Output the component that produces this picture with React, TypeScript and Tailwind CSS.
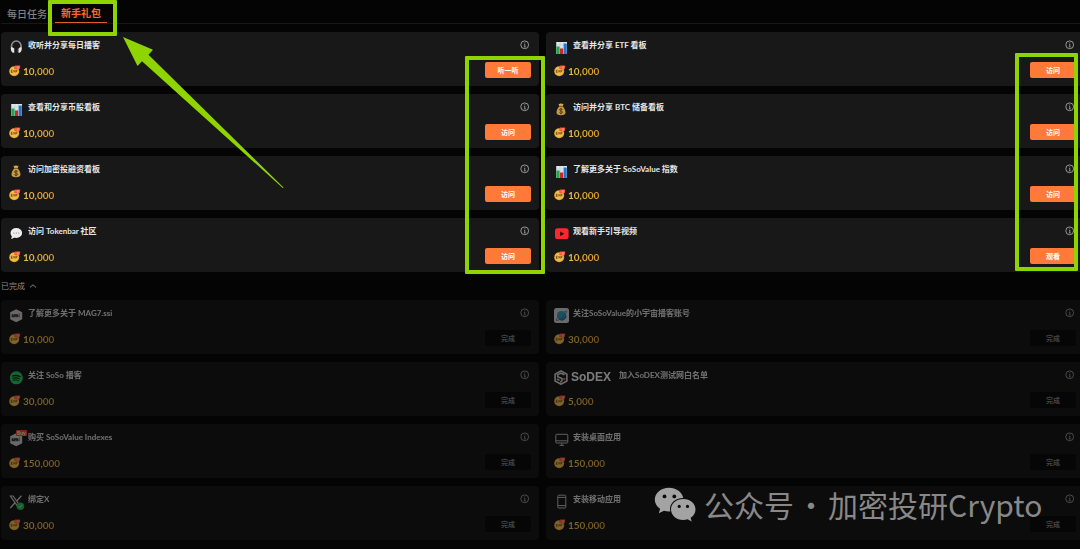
import type { ReactNode } from 'react';

type Task = { title: string; amount: string; action: string; icon: ReactNode; wide?: boolean };

function Headphones() {
  return (
    <svg viewBox="1 1.6 14.4 14.4" className="size-[15px]" aria-hidden="true">
      <path d="M3.400 10V7.400a4.600 4.900 0 0 1 9.200 0V10" fill="none" stroke="#8d9196" strokeWidth="1.500" />
      <path d="M3 8.600c1.500-.6 3.100.8 3.500 2.800.2 1.400-.2 2.400-1 2.500C3.600 14 2.300 11.500 3 8.600Z" fill="#e4e4e4" />
      <path d="M13 8.600c-1.500-.6-3.100.8-3.500 2.800-.2 1.400.2 2.400 1 2.500 1.900.1 3.200-2.400 2.500-5.300Z" fill="#e4e4e4" />
      <path d="M6.300 9.300v4.200M9.700 9.300v4.200" stroke="#3c3f44" strokeWidth=".9" />
    </svg>
  );
}

function BarChart() {
  return (
    <svg viewBox="0 0 15 15" className="size-[15px]" aria-hidden="true">
      <path d="M2.200 2h10.800v12h-10.800z" fill="#dde8ef" />
      <path d="M2.200 5h10.800M2.200 8h10.800M2.200 11h10.800M6 2v12M9.500 2v12" stroke="#aec3d1" strokeWidth=".4" />
      <path d="M2.400 6.500h3.200V14H2.400z" fill="#21a545" />
      <path d="M6 8.500h3.200V14H6z" fill="#d3242c" />
      <path d="M9.700 3.500h3.100V14H9.700z" fill="#2478c4" />
    </svg>
  );
}

function MoneyBag() {
  return (
    <svg viewBox="0.500 0.300 15 15" className="size-[15px]" aria-hidden="true">
      <path d="m5 2 1.300.4L7.500 1.500l1.200.9L10 2 9.200 4.700H5.800Z" fill="#d9ae57" />
      <path d="M5.800 4.700h3.400c1.600 1.700 2.800 3.800 2.800 6.100 0 2-1.400 2.700-4.500 2.700S3 12.800 3 10.800c0-2.300 1.200-4.400 2.800-6.100Z" fill="#c79a46" />
      <path d="M5.300 4.600h4.400" stroke="#80551e" strokeWidth="1" />
      <path d="M9 8c-.3-.7-.8-.9-1.500-.9-1 0-1.500.4-1.500 1.100 0 1.500 3.100.7 3.100 2.300 0 .8-.6 1.200-1.600 1.200-.8 0-1.400-.3-1.700-1M7.500 6.300v6.200" fill="none" stroke="#4e3513" strokeWidth=".9" />
    </svg>
  );
}

function Speech() {
  return (
    <svg viewBox="0 0 15 15" className="size-[15px]" aria-hidden="true">
      <ellipse cx="7.300" cy="7" rx="5.800" ry="4.900" fill="#eeeeee" />
      <path d="M2.800 9.500c.1 1.500-.2 2.500-.9 3.300 1.700-.1 2.900-.7 3.700-1.600Z" fill="#eeeeee" />
      <circle cx="4.900" cy="7" r=".6" fill="#777" />
      <circle cx="7.300" cy="7" r=".6" fill="#777" />
      <circle cx="9.700" cy="7" r=".6" fill="#777" />
    </svg>
  );
}

function YouTube() {
  return (
    <svg viewBox="0 0 15 15" className="size-[15px]" aria-hidden="true">
      <rect x="1" y="2.200" width="13.600" height="10.800" rx="2.600" fill="#f9282f" />
      <path d="m6.200 5.400 4 2.300-4 2.300Z" fill="#180505" />
    </svg>
  );
}

function Hexagon({ badge }: { badge?: boolean }) {
  return (
    <span className="relative block size-[15px]">
      <svg viewBox="0.800 0 15 15" className="size-[15px]" aria-hidden="true">
        <path d="m8 1.200 6 3.100v6.900l-6 3-6-3V4.300Z" fill="#d9d9d9" />
        <path d="M3.500 6.200h6.200v3H3.500z" fill="#2b2b2b" />
        <path d="M5.500 6.300v1.300M7.600 7.800v1.300" stroke="#d9d9d9" strokeWidth=".6" />
        <path d="M10.300 6.800h1v2.400h-1z" fill="#2b2b2b" />
        <circle cx="11.100" cy="5.900" r=".8" fill="#ff6b35" />
      </svg>
      {badge && (
        <span className="absolute -top-[2px] left-[7px] rounded-[1px] bg-[#ff4a22] px-[1px] text-[5px] leading-[6px] font-bold text-white">
          Buy
        </span>
      )}
    </span>
  );
}

function Spotify() {
  return (
    <svg viewBox="0.700 0.200 15 15" className="size-[15px]" aria-hidden="true">
      <circle cx="8" cy="8" r="6.500" fill="#1ed760" />
      <path d="M4.200 6.200c2.600-.8 5.500-.5 7.700.7" fill="none" stroke="#111" strokeWidth="1.300" strokeLinecap="round" />
      <path d="M4.500 8.400c2.200-.6 4.700-.4 6.600.7" fill="none" stroke="#111" strokeWidth="1.100" strokeLinecap="round" />
      <path d="M4.800 10.400c1.900-.5 3.900-.3 5.600.6" fill="none" stroke="#111" strokeWidth=".9" strokeLinecap="round" />
    </svg>
  );
}

function XCheck() {
  return (
    <svg viewBox="0 0 15 15" className="size-[15px] overflow-visible" aria-hidden="true">
      <path d="M1.400 2h2.700l8.300 11.800H9.700Z" fill="none" stroke="#d6d6d6" strokeWidth="1.200" />
      <path d="M12.400 1.700 7.900 6.800M6 8.700 1.300 14" stroke="#d6d6d6" strokeWidth="1.300" />
      <circle cx="11.400" cy="12.200" r="3.800" fill="#26c251" />
      <path d="m9.700 12.200 1.200 1.300 2.200-2.600" fill="none" stroke="#c9f5d5" strokeWidth=".9" />
    </svg>
  );
}

function Planet() {
  return (
    <svg viewBox="0 0 15 15" className="size-[15px]" aria-hidden="true">
      <rect width="15" height="15" rx="2.500" fill="#dedede" />
      <circle cx="7.500" cy="7.500" r="4.500" fill="#2fa3cb" />
      <path d="M4.500 11c3.500.8 6.800-1.500 7.400-5a4.500 4.500 0 0 1-7.400 5Z" fill="#1b7fa8" />
      <path d="M3.900 9.200C2 11.400 1.900 12.700 3 12.600c1.800-.2 9.300-6.500 9.700-9.100.1-1-1.200-.7-2.500.2" fill="none" stroke="#55606a" strokeWidth=".8" />
    </svg>
  );
}

function SoDex() {
  return (
    <span className="flex h-[15px] items-center gap-[3px]">
      <svg viewBox="0 0 14 15" className="h-[15px] w-[14px]" aria-hidden="true">
        <path d="m7 .9 5.900 3.300v6.800L7 14.200 1.100 11V4.200Z" fill="none" stroke="#e2e2e2" strokeWidth="1.600" />
        <path d="M10.500 4.700 7 3.200 3.700 4.900v1.900L8 8.500v2L6.300 12.500M3 9l2.500 1.300" fill="none" stroke="#e2e2e2" strokeWidth="1.500" />
        <circle cx="10.200" cy="9" r="1.300" fill="#ff5630" />
      </svg>
      <span className="font-['Liberation_Sans',sans-serif] text-[12px] leading-[15px] font-bold text-white">SoDEX</span>
    </span>
  );
}

function Monitor() {
  return (
    <svg viewBox="0 0 15 15" className="size-[15px]" fill="none" stroke="#c4c4c4" strokeWidth="1" aria-hidden="true">
      <rect x="1.800" y="2.300" width="12" height="8.700" rx=".8" />
      <path d="M1.800 8.800h12M7.800 11v2.200M5.500 13.400h4.600" />
    </svg>
  );
}

function Phone() {
  return (
    <svg viewBox="0 0 15 15" className="size-[15px]" fill="none" stroke="#c4c4c4" strokeWidth="1" aria-hidden="true">
      <rect x="3.800" y="1.200" width="8" height="12.800" rx="1" />
      <path d="M3.800 3.400h8M3.800 11.600h8" />
    </svg>
  );
}

function Coin() {
  return (
    <svg viewBox="0.500 0 12 12" className="size-3" aria-hidden="true">
      <circle cx="5.700" cy="6.300" r="5" fill="#e9a632" />
      <circle cx="5.500" cy="5.900" r="4" fill="#f3bd4c" />
      <path d="M2.600 5.200h1.500M2.600 6.300h1.300M2.600 7.400h1.500M2.800 5.200v2.200M4.900 5.200l1.500 2.200M6.400 5.200 4.900 7.400M7.300 7.500V5.200h1.200v1.200H7.300" fill="none" stroke="#6b4511" strokeWidth=".7" />
      <path d="M6.700.6h4.600c.4 0 .6.300.5.700l-.5 2.400c-.1.400-.4.600-.8.600H6.300c-.4 0-.6-.3-.5-.7L6 1.200c.1-.4.300-.6.700-.6Z" fill="#f5502e" />
      <path d="M7.600 1.500v1.900M9 1.500v1.900h1.200V1.500Z" fill="none" stroke="#ffc2b2" strokeWidth=".5" />
    </svg>
  );
}

function Info() {
  return (
    <svg viewBox="0 0 10 10" className="size-[10px]" fill="none" stroke="#a3a3a3" aria-hidden="true">
      <circle cx="4.700" cy="4.800" r="3.900" strokeWidth=".9" />
      <path d="M4.800 4.200v2.700M4 4.400h.8M3.900 6.900h1.800" strokeWidth=".8" />
      <circle cx="4.800" cy="2.800" r=".5" fill="#a3a3a3" stroke="none" />
    </svg>
  );
}

const openTasks: Task[] = [
  { title: '收听并分享每日播客', amount: '10,000', action: '听一听', icon: <Headphones /> },
  { title: '查看并分享 ETF 看板', amount: '10,000', action: '访问', icon: <BarChart /> },
  { title: '查看和分享币股看板', amount: '10,000', action: '访问', icon: <BarChart /> },
  { title: '访问并分享 BTC 储备看板', amount: '10,000', action: '访问', icon: <MoneyBag /> },
  { title: '访问加密投融资看板', amount: '10,000', action: '访问', icon: <MoneyBag /> },
  { title: '了解更多关于 SoSoValue 指数', amount: '10,000', action: '访问', icon: <BarChart /> },
  { title: '访问 Tokenbar 社区', amount: '10,000', action: '访问', icon: <Speech /> },
  { title: '观看新手引导视频', amount: '10,000', action: '观看', icon: <YouTube /> },
];

const doneTasks: Task[] = [
  { title: '了解更多关于 MAG7.ssi', amount: '10,000', action: '完成', icon: <Hexagon /> },
  { title: '关注SoSoValue的小宇宙播客账号', amount: '30,000', action: '完成', icon: <Planet /> },
  { title: '关注 SoSo 播客', amount: '30,000', action: '完成', icon: <Spotify /> },
  { title: '加入SoDEX测试网白名单', amount: '5,000', action: '完成', icon: <SoDex />, wide: true },
  { title: '购买 SoSoValue Indexes', amount: '150,000', action: '完成', icon: <Hexagon badge /> },
  { title: '安装桌面应用', amount: '150,000', action: '完成', icon: <Monitor /> },
  { title: '绑定X', amount: '30,000', action: '完成', icon: <XCheck /> },
  { title: '安装移动应用', amount: '150,000', action: '完成', icon: <Phone /> },
];

function TaskCard({ task, done }: { task: Task; done?: boolean }) {
  return (
    <li className={done ? 'rounded bg-[#0c0c0c]' : 'rounded bg-[#181818]'}>
      <article className="flex flex-col gap-[7px] p-2">
        <div className={done ? 'flex items-start opacity-45' : 'flex items-start'}>
          <span className={task.wide ? 'mr-2 shrink-0' : 'mr-1 shrink-0'}>{task.icon}</span>
          <h3 className="flex-1 text-[8px] leading-[10px] font-bold text-[#e6e6e6]">{task.title}</h3>
          <button type="button" aria-label="详情" className="mr-[1px]">
            <Info />
          </button>
        </div>
        <div className="flex items-end justify-between">
          <div className={done ? 'flex items-center gap-[2px] opacity-50' : 'flex items-center gap-[2px]'}>
            <Coin />
            <span className="bg-linear-to-r from-[#edc14f] to-[#d8952a] bg-clip-text text-[10px] leading-[14px] font-bold text-transparent">
              {task.amount}
            </span>
          </div>
          <button
            type="button"
            disabled={done}
            className={
              done
                ? 'h-4 w-[46px] rounded-[2px] bg-[#060606] text-[7px] leading-4 font-bold text-[#444444]'
                : 'h-4 w-[46px] rounded-[2px] bg-[#ff7a38] text-[7px] leading-4 font-bold text-white'
            }
          >
            {task.action}
          </button>
        </div>
      </article>
    </li>
  );
}

function TaskGrid({ tasks, done }: { tasks: Task[]; done?: boolean }) {
  return (
    <ul className="-mr-1 ml-[1px] grid grid-cols-2 gap-x-[7px] gap-y-2">
      {tasks.map((task) => (
        <TaskCard key={task.title} task={task} done={done} />
      ))}
    </ul>
  );
}

function WeChat() {
  return (
    <svg viewBox="0 0 42 36" className="h-9 w-[42px]" aria-hidden="true">
      <path d="M15 1.800C7 1.800.8 7 .8 13.600c0 3.900 2 7 5.300 9.200L4.800 27.300l5.200-2.600c1.600.5 3.300.8 5 .8l1.300-.1C14.600 18.100 20.800 11.600 29.300 11.900 27.900 6 22 1.800 15 1.800Z" fill="#a3a3a3" />
      <path d="M29.300 13.100c-7 0-12.300 4.600-12.300 10.400s5.300 10.500 12.300 10.500c1.500 0 3-.3 4.300-.7l4.100 2.200-1.100-3.700c3-2 4.900-4.900 4.900-8.300 0-5.800-5.300-10.400-12.200-10.400Z" fill="#a3a3a3" />
      <g fill="#0c0c0c">
        <circle cx="10.500" cy="10.400" r="1.900" />
        <circle cx="20.300" cy="10.400" r="1.900" />
        <circle cx="25.200" cy="20.400" r="1.600" />
        <circle cx="33.500" cy="20.400" r="1.600" />
      </g>
    </svg>
  );
}

export default function App() {
  return (
    <main className="relative min-h-screen overflow-hidden bg-[#040404] font-[Lato,'Noto_Sans_CJK_SC',sans-serif]">
      <nav className="mb-2 ml-[1px] flex h-6 gap-[2px] border-b border-[#171717]">
        <button type="button" className="h-[23px] px-[6px] pt-1 text-[10px] leading-[18px] font-medium text-[#808080]">
          每日任务
        </button>
        <button type="button" className="h-[23px] border-b border-[#d9602f] px-[6px] pt-1 text-[10px] leading-[18px] font-bold text-[#ff6a33]">
          新手礼包
        </button>
      </nav>

      <TaskGrid tasks={openTasks} />

      <button type="button" className="ml-[1px] flex h-7 items-center gap-1 text-[8px] text-[#8c8c8c]">
        已完成
        <svg viewBox="0 0 8 6" className="h-[6px] w-2" fill="none" stroke="#8c8c8c" strokeWidth=".9" aria-hidden="true">
          <path d="m1 4.400 3-2.600 3 2.600" />
        </svg>
      </button>

      <TaskGrid tasks={doneTasks} done />

      <div className="pointer-events-none absolute top-0 left-12 h-9 w-[69px] rounded-[1px] border-4 border-[#8fd400]" />
      <div className="pointer-events-none absolute top-14 left-[465px] h-[218px] w-20 rounded-[1px] border-4 border-[#8fd400]" />
      <div className="pointer-events-none absolute top-[53px] left-[1015px] h-[218px] w-[63px] rounded-[1px] border-4 border-[#8fd400]" />
      <svg viewBox="0 0 161 152" className="pointer-events-none absolute top-[37px] left-[123px] h-[152px] w-[161px]" aria-hidden="true">
        <path d="M0 0 30 12.700 25.500 17.700 160.500 150.500 160 151.200 19 24.200 14.500 29Z" fill="#8fd400" />
      </svg>

      <div className="pointer-events-none absolute top-[486px] left-[654px] flex items-center gap-2">
        <WeChat />
        <p className="flex gap-[2px] font-['Noto_Sans_CJK_SC',sans-serif] text-[30px] leading-9 font-normal whitespace-nowrap text-[#888888]">
          <span>公众号</span>
          <span>·</span>
          <span>加密投研Crypto</span>
        </p>
      </div>
    </main>
  );
}
